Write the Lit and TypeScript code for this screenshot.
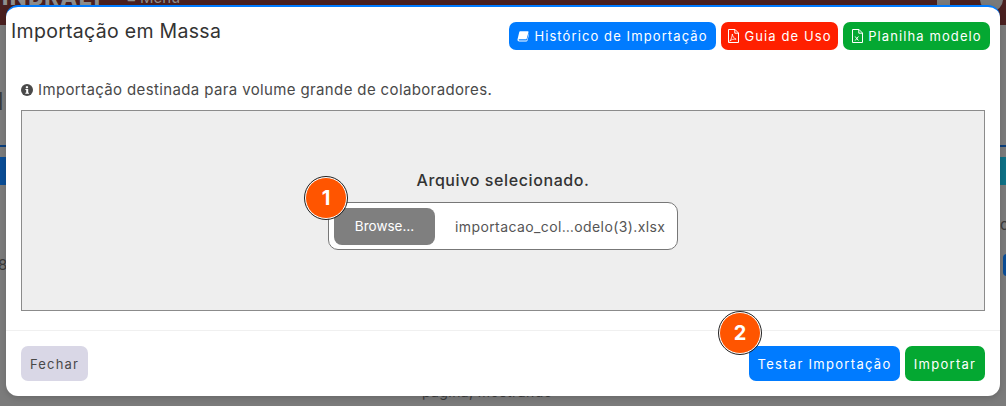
import { LitElement, html, css, svg } from "lit";
import { customElement } from "lit/decorators.js";

const bookIcon = svg`<svg class="ic" viewBox="0 0 14 14" width="12" height="12" fill="#fff"><path d="M3.600 1.600h9.200c.5 0 .8.400.6.900l-2 7.400c-.2.700-.6 1-1.300 1H2.700c-.8 0-1 .5-.9.800.1.300.4.600.9.600h8.300c.4 0 .6-.2.700-.5l2.300-8c.3.100.4.300.3.700l-2.200 7.900c-.2.600-.7 1-1.300 1H2.600c-1.200 0-2-.9-2-2 0-.3 0-.5.100-.8L2.500 2.800c.2-.7.600-1.200 1.100-1.200z"/></svg>`;
const fileOutline = svg`<path d="M1.500.5h6.500l3.500 3.500v9.500h-10z" fill="none" stroke="currentColor" stroke-width="1"/><path d="M7.800.5v3.700h3.700" fill="none" stroke="currentColor" stroke-width="1"/>`;
const pdfIcon = svg`<svg class="ic" viewBox="0 0 12 14" width="12" height="14" color="#fff">${fileOutline}<path d="M5.300 5c.4 2.500 1.500 4.200 3.800 5.200-2.500-.3-4.800.2-6.300 2 1.300-2 2.500-4.500 2.500-7.200z" fill="none" stroke="currentColor" stroke-width=".8"/></svg>`;
const xlsIcon = svg`<svg class="ic" viewBox="0 0 12 14" width="12" height="14" color="#fff">${fileOutline}<path d="M4.200 7.500l3.200 4M7.400 7.500l-3.200 4" fill="none" stroke="currentColor" stroke-width="1"/></svg>`;
const infoIcon = svg`<svg class="info" viewBox="0 0 12 12" width="12" height="12"><circle cx="6" cy="6" r="6" fill="#494949"/><rect x="4.800" y="2.200" width="2.300" height="2" rx=".6" fill="#fff"/><path d="M4.400 5.100h2.800v3.700h.8v1H4.300v-1h.9V6.100h-.8z" fill="#fff"/></svg>`;

@customElement("app-root")
export class AppRoot extends LitElement {
  static styles = css`
    :host {
      display: block;
      width: 1006px;
      height: 406px;
      overflow: hidden;
      font-family: "Inter", "Liberation Sans", sans-serif;
    }
    .page {
      position: relative;
      width: 1006px;
      height: 406px;
      background: #7b7b7b;
      overflow: hidden;
    }
    .topbar {
      height: 25px;
      background: #4a2020;
    }
    .bg { position: absolute; }
    .brand { left: 2px; top: -14px; font-size: 22px; font-weight: 800; color: #8e8e8e; letter-spacing: 1.500px; line-height: 22px; }
    .menu { left: 127px; top: -11px; font-size: 15px; color: #8e8e8e; line-height: 18px; }
    .av1 { left: 937px; top: -6px; width: 13px; height: 11px; background: #7a7a7a; border-radius: 6px 6px 0 0; }
    .av2 { left: 980px; top: -12px; width: 23px; height: 23px; background: #7a7a7a; border-radius: 50%; }
    .ltr { left: -3px; top: 88px; font-size: 24px; color: #3a3a3a; line-height: 28px; font-weight: 600; }
    .rule { height: 2px; top: 145px; background: #0b3f7d; }
    .rl { left: 0; width: 6px; }
    .rr { left: 1000px; width: 6px; }
    .tabl { left: 0; top: 157px; width: 6px; height: 28px; background: #0a4d96; }
    .tabr { left: 1000px; top: 157px; width: 6px; height: 28px; background: #0e7186; }
    .eight { left: -2px; top: 256px; font-size: 15px; color: #3a3a3a; line-height: 18px; }
    .cc { left: 1000px; top: 216px; font-size: 15px; color: #3a3a3a; line-height: 18px; }
    .pill { left: 1003px; top: 254px; width: 8px; height: 22px; border-radius: 5px; background: #0a4d96; }
    .tail { left: 422px; top: 383px; font-size: 14px; color: #3a3a3a; line-height: 18px; white-space: nowrap; letter-spacing: .4px; }
    .modal {
      position: absolute;
      left: 6px;
      top: 5px;
      width: 994px;
      height: 391px;
      box-sizing: border-box;
      background: #fff;
      border-top: 2px solid #007bff;
      border-radius: 12px;
      display: flex;
      flex-direction: column;
      color: #494949;
      box-shadow: 0 2px 6px rgba(0, 0, 0, .15);
    }
    .head {
      display: flex;
      justify-content: space-between;
      align-items: flex-start;
      padding: 15px 10px 0 5px;
      height: 72px;
      box-sizing: border-box;
    }
    h4 {
      margin: 0;
      font-size: 19.500px;
      font-weight: 400;
      line-height: 20px;
      letter-spacing: .3px;
      color: #333;
      margin-top: -1px;
    }
    .links { display: flex; gap: 5px; }
    .btn {
      display: inline-flex;
      align-items: center;
      justify-content: center;
      gap: 5px;
      color: #fff;
      font-size: 13px;
      letter-spacing: 1.300px;
      border-radius: 7px;
      white-space: nowrap;
    }
    .links .btn { height: 28px; letter-spacing: 1.100px; }
    .hist { width: 207px; }
    .guia { width: 117px; }
    .plan { width: 147px; }
    .blue { background: #007bff; }
    .red { background: #ff2000; }
    .green { background: #04a832; }
    .body { padding: 0 15px; display: flex; flex-direction: column; }
    .note {
      display: flex;
      align-items: center;
      gap: 5px;
      font-size: 15px;
      letter-spacing: .37px;
      line-height: 22px;
      height: 22px;
      margin-bottom: 9px;
      white-space: nowrap;
    }
    .drop {
      height: 201px;
      box-sizing: border-box;
      background: #eee;
      border: 1px solid #8b8b8b;
      display: flex;
      flex-direction: column;
      align-items: center;
      padding-top: 58px;
    }
    .drop p {
      margin: 0 0 11px;
      font-size: 16px;
      letter-spacing: .6px;
      line-height: 22px;
      font-weight: 500;
      color: #333;
    }
    .file {
      position: relative;
      width: 350px;
      height: 48px;
      box-sizing: border-box;
      background: #fff;
      border: 1px solid #777;
      border-radius: 10px;
      display: flex;
      align-items: center;
      padding: 0 5px;
      font-size: 14px;
      letter-spacing: .4px;
    }
    .browse {
      width: 101px;
      height: 37px;
      background: #7f7f7f;
      color: #fff;
      border-radius: 8px;
      display: flex;
      align-items: center;
      justify-content: center;
      font-size: 13.500px;
      letter-spacing: 0;
      margin-right: 20px;
    }
    .name { color: #555; white-space: nowrap; }
    .badge {
      position: absolute;
      width: 42px;
      height: 42px;
      box-sizing: border-box;
      border-radius: 50%;
      background: #ff5500;
      border: 1px solid #fff;
      outline: 1.500px solid #222;
      color: #fff;
      font-weight: 700;
      font-size: 20px;
      letter-spacing: 0;
      display: flex;
      align-items: center;
      justify-content: center;
    }
    .b1 { left: -24px; top: -26px; }
    .b2 { left: 713px; top: 305px; }
    .foot {
      margin-top: 19px;
      border-top: 1px solid #f0f0f0;
      padding: 15px 15px 0;
      display: flex;
      justify-content: space-between;
    }
    .foot .btn { height: 35px; }
    .right { display: flex; gap: 5px; }
    .t { width: 151px; }
    .i { width: 80px; }
    .close { width: 67px; background: #d9d7e6; color: #494949; letter-spacing: 1.200px; }
  `;

  render() {
    return html`<div class="page">
      <div class="topbar"></div>
      <span class="bg brand">INBRAEP</span>
      <span class="bg menu">≡ Menu</span>
      <span class="bg av1"></span>
      <span class="bg av2"></span>
      <span class="bg ltr">l</span>
      <span class="bg rule rl"></span>
      <span class="bg rule rr"></span>
      <span class="bg tabl"></span>
      <span class="bg tabr"></span>
      <span class="bg eight">8</span>
      <span class="bg cc">c</span>
      <span class="bg pill"></span>
      <span class="bg tail">página, mostrando</span>
      <div class="modal">
        <div class="head">
          <h4>Importação em Massa</h4>
          <div class="links">
            <span class="btn blue hist">${bookIcon}Histórico de Importação</span>
            <span class="btn red guia">${pdfIcon}Guia de Uso</span>
            <span class="btn green plan">${xlsIcon}Planilha modelo</span>
          </div>
        </div>
        <div class="body">
          <div class="note">${infoIcon}Importação destinada para volume grande de colaboradores.</div>
          <div class="drop">
            <p>Arquivo selecionado.</p>
            <div class="file">
              <span class="badge b1">1</span>
              <span class="browse">Browse…</span>
              <span class="name">importacao_col…odelo(3).xlsx</span>
            </div>
          </div>
        </div>
        <div class="foot">
          <span class="btn close">Fechar</span>
          <div class="right">
            <span class="btn blue t">Testar Importação</span>
            <span class="btn green i">Importar</span>
          </div>
        </div>
        <span class="badge b2">2</span>
      </div>
    </div>`;
  }
}
